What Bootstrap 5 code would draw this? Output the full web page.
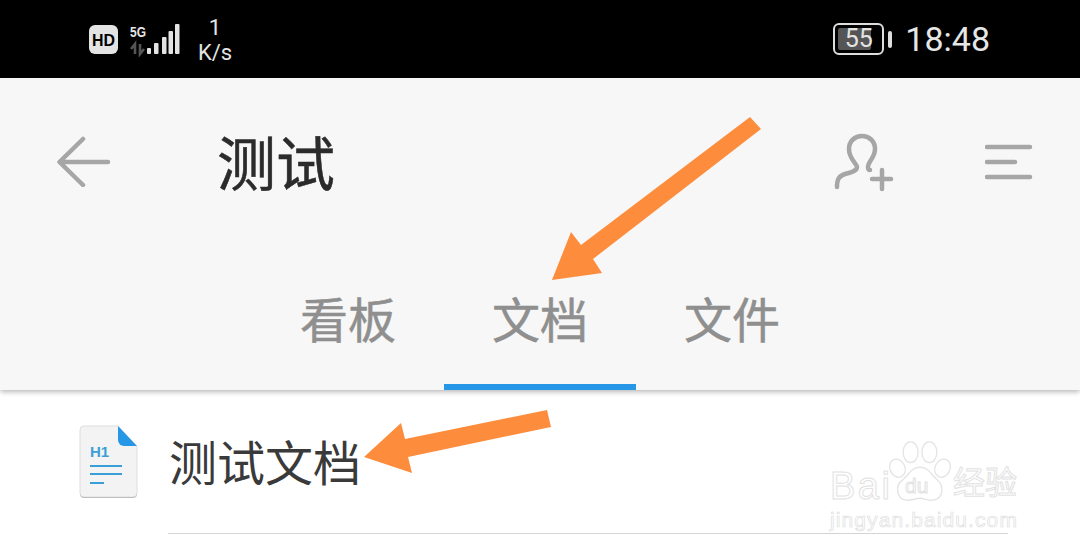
<!DOCTYPE html>
<html lang="zh">
<head>
<meta charset="UTF-8" />
<title>测试</title>
<link rel="stylesheet" href="https://cdn.jsdelivr.net/npm/bootstrap@5.3.0/dist/css/bootstrap.min.css" />
<style>
    html, body { width: 1080px; height: 556px; overflow: hidden; background: #fff; }
    body { font-family: "Roboto", "Noto Sans CJK SC", sans-serif; position: relative; }
    .status-bar { height: 78px; background: #000; color: #e4e4e4; padding-left: 89px; padding-right: 90px; }
    .net-speed { width: 36px; margin-left: 16px; line-height: 25px; font-size: 22px; text-align: center; padding-top: 1px; }
    .batt { width: 51px; height: 32px; border: 2px solid #ddd; border-radius: 6px; padding: 3px; margin-right: 4px; }
    .batt-fill { width: 80%; height: 100%; background: #555; border-radius: 2px; }
    .batt-num { left: 0; right: 0; top: 0; bottom: 0; font-size: 25px; line-height: 28px; text-align: center; }
    .batt-tip { width: 4px; height: 17px; background: #ddd; border-radius: 2px; margin-right: 13px; }
    .clock { font-size: 34px; line-height: 40px; color: #e6e6e6; }
    .top-area { height: 312px; background: #f7f7f7; box-shadow: 0 2px 5px rgba(0,0,0,.28); }
    .tool-row { height: 172px; padding-left: 56px; padding-top: 55px; }
    .page-title { font-size: 59px; line-height: 66px; color: #2b2b2b; margin-left: 105px; font-weight: 400; -webkit-text-stroke: .5px #2b2b2b; }
    .tool-icon { margin-top: -2px; }
    .tool-icon-user { margin-left: 499px; margin-top: -1px; }
    .tool-icon-menu { margin-left: 91px; margin-top: 11px; }
    .tab-row { height: 140px; padding-left: 252px; }
    .tab-item { width: 192px; height: 140px; font-size: 48px; line-height: 56px; font-weight: 400; -webkit-text-stroke: .5px #8f8f8f; color: #8f8f8f; text-align: center; padding-top: 44px; }
    .tab-on { border-bottom: 6px solid #2597e6; }
    .doc-row { margin-left: 78px; height: 143px; }
    .doc-icon { margin-top: 35px; }
    .doc-text { margin-left: 31px; padding-top: 44px; width: 840px; height: 143px; }
    .doc-name { font-size: 48px; line-height: 62px; color: #3a3a3a; }
    .doc-line { left: 168px; top: 533px; width: 840px; height: 1px; background: #d4d4d4; }
    .arrows { left: 0; top: 0; pointer-events: none; }
    .wm { left: 830px; top: 440px; width: 195px; height: 95px; color: #fff; -webkit-text-stroke: 1px #e2e2e2; font-family: "Liberation Sans", "Noto Sans CJK SC", sans-serif; }
    .wm-bai { left: 0; top: 24px; font-size: 38px; line-height: 44px; letter-spacing: 2.5px; }
    .wm-du { left: 75px; top: 32px; font-size: 21px; line-height: 28px; }
    .wm-jy { left: 123px; top: 22px; font-size: 32px; line-height: 42px; }
    .wm-url { left: 0; top: 68px; font-size: 21px; line-height: 24px; letter-spacing: 1.1px; -webkit-text-stroke: .7px #e0e0e0; white-space: nowrap; }
    .wm-paw { left: 56px; top: 0; }
</style>
</head>
<body>

<!-- status bar -->
<div class="status-bar d-flex align-items-center">
    <svg width="92" height="36" viewBox="0 0 92 36">
        <rect x="0" y="4" width="29" height="29" rx="6" fill="#e4e4e4"/>
        <text x="14.5" y="25" font-size="17" font-weight="700" text-anchor="middle" fill="#000" font-family="Liberation Sans" textLength="23" lengthAdjust="spacingAndGlyphs">HD</text>
        <text x="41" y="16" font-size="15" font-weight="700" fill="#e4e4e4" font-family="Liberation Sans" textLength="16" lengthAdjust="spacingAndGlyphs">5G</text>
        <path d="M46 33V23l-4 5M51 23v10l4-5" stroke="#555" stroke-width="2.6" fill="none"/>
        <rect x="58" y="27" width="4" height="6" rx="1" fill="#e4e4e4"/>
        <rect x="65" y="22" width="4.5" height="11" rx="1" fill="#e4e4e4"/>
        <rect x="73" y="16" width="4.5" height="17" rx="1" fill="#e4e4e4"/>
        <rect x="79.5" y="10" width="4.5" height="23" rx="1" fill="#e4e4e4"/>
        <rect x="86" y="3" width="4.5" height="30" rx="1" fill="#e4e4e4"/>
    </svg>
    <div class="net-speed">1<br>K/s</div>
    <div class="ms-auto d-flex align-items-center">
        <div class="batt position-relative">
            <div class="batt-fill"></div>
            <div class="batt-num position-absolute">55</div>
        </div>
        <div class="batt-tip"></div>
        <div class="clock">18:48</div>
    </div>
</div>

<!-- header with tabs -->
<div class="top-area position-relative">
    <div class="tool-row d-flex align-items-start">
        <svg class="tool-icon" width="56" height="56" viewBox="0 0 56 56" fill="none" stroke="#a6a6a6" stroke-width="4.5" stroke-linecap="round" stroke-linejoin="round">
            <path d="M52 31H4M27 8L3.5 31 27 54"/>
        </svg>
        <div class="page-title">测试</div>
        <svg class="tool-icon-user" width="60" height="60" viewBox="0 0 60 60" fill="none" stroke="#a6a6a6" stroke-width="4.5" stroke-linecap="round">
            <path d="M3 55c0-8 2-11 8-13 7-2 12-3 12-7 0-3-8-8-8-18 0-8 6-13 13-13s13 5 13 13c0 9-7 12-7 18 0 2 1 3 2 3"/>
            <path d="M38 47h19M48 38v19"/>
        </svg>
        <svg class="tool-icon-menu" width="48" height="38" viewBox="0 0 48 38" fill="none" stroke="#a6a6a6" stroke-width="4.5" stroke-linecap="round">
            <path d="M2 3h43M2 18h28M2 33h43"/>
        </svg>
    </div>
    <div class="tab-row d-flex">
        <div class="tab-item">看板</div>
        <div class="tab-item tab-on">文档</div>
        <div class="tab-item">文件</div>
    </div>
</div>

<!-- document row -->
<div class="doc-row d-flex align-items-start">
    <svg class="doc-icon flex-shrink-0" width="60" height="74" viewBox="0 0 60 74">
        <path d="M6 1h34l19 21v46a4 4 0 0 1-4 4H6a4 4 0 0 1-4-4V5a4 4 0 0 1 4-4z" fill="#f3f3f3" stroke="#dedede" stroke-width="1"/>
        <path d="M2 68a4 4 0 0 0 4 4h49a4 4 0 0 0 4-4v2a4 4 0 0 1-4 3H6a4 4 0 0 1-4-3z" fill="#bdbdbd"/>
        <path d="M40 1l19 20H46a6 6 0 0 1-6-6z" fill="#2597e6"/>
        <text x="12" y="32" font-size="15" font-weight="700" fill="#3a9fd8" font-family="Liberation Sans">H1</text>
        <path d="M12 41h32M12 49h32M12 58h14" stroke="#3a9fd8" stroke-width="2.2"/>
    </svg>
    <div class="doc-text"><div class="doc-name">测试文档</div></div>
</div>
<div class="doc-line position-absolute"></div>

<!-- watermark -->
<div class="wm position-absolute">
    <svg class="wm-paw position-absolute" width="68" height="62" viewBox="0 0 72 66" fill="#fff" stroke="#e4e4e4" stroke-width="1.4">
        <ellipse cx="26" cy="13" rx="8" ry="11"/>
        <ellipse cx="46" cy="13" rx="8" ry="11"/>
        <ellipse cx="12" cy="30" rx="8" ry="10" transform="rotate(-25 12 30)"/>
        <ellipse cx="60" cy="30" rx="8" ry="10" transform="rotate(25 60 30)"/>
        <path d="M36 29c9 0 12 8 19 14 6 5 7 19-5 21-6 1-9-2-14-2s-9 3-15 2C10 62 10 48 17 43c7-6 10-14 19-14z"/>
    </svg>
    <div class="wm-bai position-absolute">Bai</div>
    <div class="wm-du position-absolute">du</div>
    <div class="wm-jy position-absolute">经验</div>
    <div class="wm-url position-absolute">jingyan.baidu.com</div>
</div>

<!-- annotation arrows -->
<svg class="arrows position-absolute" width="1080" height="556" viewBox="0 0 1080 556" fill="#fd8d3c">
    <path d="M750 117L761 129 593 259 602 273 552 280 571 232 581 245z"/>
    <path d="M547 410L551 427 408 457 412 473 364 457 401 423 405 439z"/>
</svg>

<script src="https://cdn.jsdelivr.net/npm/bootstrap@5.3.0/dist/js/bootstrap.bundle.min.js"></script>
</body>
</html>
